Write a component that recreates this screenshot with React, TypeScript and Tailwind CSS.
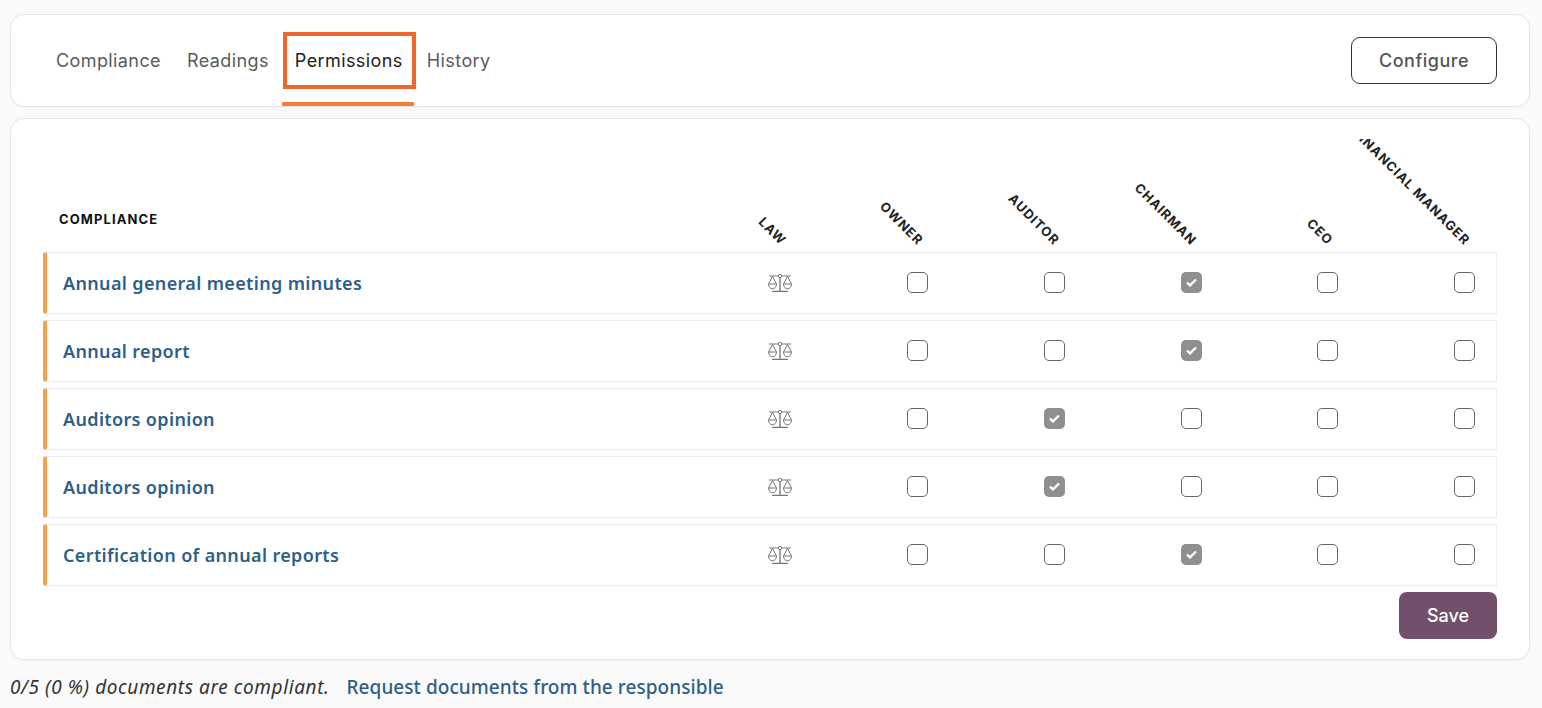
const tabs = ["Compliance", "Readings", "Permissions", "History"]
const roles = ["OWNER", "AUDITOR", "CHAIRMAN", "CEO", "FINANCIAL MANAGER"]

const rows = [
  { name: "Annual general meeting minutes", checked: 2 },
  { name: "Annual report", checked: 2 },
  { name: "Auditors opinion", checked: 1 },
  { name: "Auditors opinion", checked: 1 },
  { name: "Certification of annual reports", checked: 2 },
]

const LawIcon = () => (
  <svg width="24" height="18" viewBox="0 0 24 18" fill="none" stroke="#777" strokeWidth="1">
    <path d="M1 2h9.300M13.700 2H23" />
    <circle cx="12" cy="2" r="1.700" />
    <path d="M12 3.700V17M4 17.300h16" strokeWidth="1.300" />
    <path d="M4.500 2.500.5 10a4 4.800 0 0 0 8 0L4.500 2.500ZM19.500 2.500 15.500 10a4 4.800 0 0 0 8 0L19.500 2.500ZM.5 10h8M15.500 10h8" />
  </svg>
)

const Checkbox = ({ checked }: { checked?: boolean }) =>
  checked ? (
    <span className="flex h-[21px] w-[21px] items-center justify-center rounded-[5px] bg-[#8f8f8f]">
      <svg width="13" height="11" viewBox="0 0 13 11" fill="none" stroke="#fff" strokeWidth="2.400">
        <path d="M2 5.600 5 8.400 11 2.500" />
      </svg>
    </span>
  ) : (
    <span className="block h-[21px] w-[21px] rounded-[5px] border border-[#666] bg-white" />
  )

const App = () => {
  return (
    <div className="h-[708px] w-[1542px] overflow-hidden bg-[#fafafa] pl-[10px] pr-[12px] pt-[14px] font-['Inter',sans-serif]">
      <div className="flex h-[93px] items-center justify-between rounded-[14px] border border-[#e6e6e6] bg-white pl-[32px] pr-[32px] shadow-[0_1px_2px_rgba(0,0,0,0.03)]">
        <div className="flex h-full items-stretch">
          {tabs.map((tab) =>
            tab === "Permissions" ? (
              <div key={tab} className="flex h-full w-[132px] items-center border-b-4 border-[#f47e3a] pl-[5px]">
                <span className="mt-[3px] flex h-[49px] w-[125px] items-center pl-[8px] text-[18px] tracking-[0.4px] text-[#222] outline-4 outline-[#ee672d]">
                  {tab}
                </span>
              </div>
            ) : (
              <div key={tab} className="flex items-center px-[13px] pb-[1px] text-[18px] tracking-[0.4px] text-[#5b5b5b]">
                {tab}
              </div>
            ),
          )}
        </div>
        <button className="h-[47px] w-[146px] rounded-[9px] border border-[#333] bg-white text-[18px] font-medium tracking-[0.5px] text-[#555]">
          Configure
        </button>
      </div>

      <div className="mt-[11px] h-[542px] rounded-[14px] border border-[#e6e6e6] bg-white px-[32px] pt-[20px] shadow-[0_1px_2px_rgba(0,0,0,0.03)]">
        <div className="grid h-[113px] grid-cols-[1fr_repeat(6,136.7px)] overflow-hidden pr-[22px]">
          <div className="self-end pb-[23px] pl-[16px] text-[13px] font-bold tracking-[1.1px] text-[#111]">COMPLIANCE</div>
          {["LAW", ...roles].map((role) => (
            <div key={role} className="relative">
              <span className="absolute bottom-[4px] right-[13px] origin-bottom-right rotate-45 whitespace-nowrap text-[13px] font-bold leading-[16px] tracking-[1px] text-[#222]">
                {role}
              </span>
            </div>
          ))}
        </div>

        <div className="flex flex-col gap-[6px]">
          {rows.map((row, i) => (
            <div
              key={i}
              className="grid h-[62px] grid-cols-[1fr_repeat(6,136.7px)] items-center rounded-l-[3px] border border-l-4 border-[#eeeeee] border-l-[#f2a24f] pl-[16px] pr-[21px]"
            >
              <div className="font-['Noto_Sans',sans-serif] text-[18px] font-semibold tracking-[0.35px] text-[#2d5f8a]">{row.name}</div>
              <div className="flex justify-end">
                <LawIcon />
              </div>
              {roles.map((role, j) => (
                <div key={role} className="flex justify-end pb-[1px]">
                  <Checkbox checked={j === row.checked} />
                </div>
              ))}
            </div>
          ))}
        </div>

        <div className="mt-[6px] flex justify-end">
          <button className="h-[47px] w-[98px] rounded-[8px] bg-[#72506b] text-[18px] font-medium text-white">Save</button>
        </div>
      </div>

      <div className="mt-[13px] flex items-center font-['Noto_Sans',sans-serif] text-[19px] text-[#333]">
        <span className="italic tracking-[0.6px]">0/5 (0 %) documents are compliant.</span>
        <span className="ml-[17px] font-medium tracking-[0.05px] text-[#2d5f8a]">Request documents from the responsible</span>
      </div>
    </div>
  )
}

export default App
